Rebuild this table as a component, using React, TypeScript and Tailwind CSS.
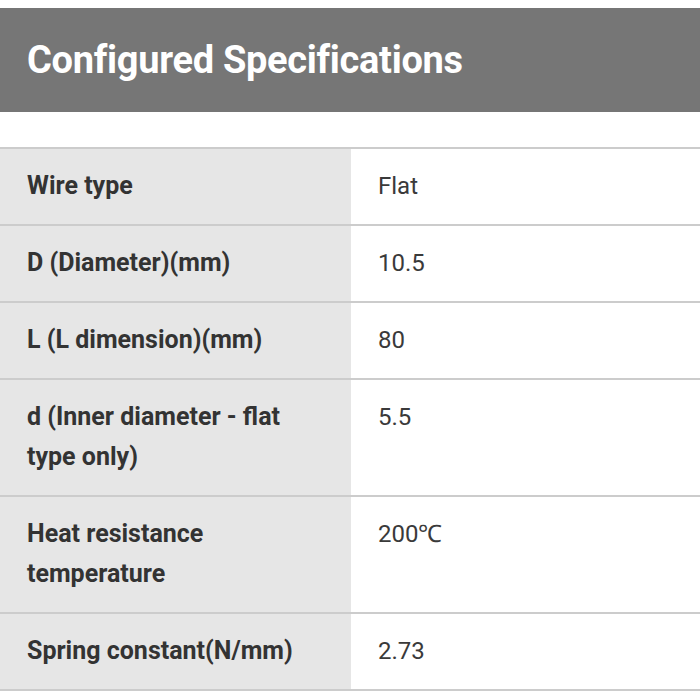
const specs: { label: string; value: string }[] = [
  { label: 'Wire type', value: 'Flat' },
  { label: 'D (Diameter)(mm)', value: '10.5' },
  { label: 'L (L dimension)(mm)', value: '80' },
  { label: 'd (Inner diameter - flat type only)', value: '5.5' },
  { label: 'Heat resistance temperature', value: '200℃' },
  { label: 'Spring constant(N/mm)', value: '2.73' },
];

export default function App() {
  return (
    <div className="w-[700px] h-[700px] overflow-hidden bg-white font-['Roboto',sans-serif] text-[#333]">
      <div className="mt-[8px] h-[104px] bg-[#767676] flex items-center px-[27px]">
        <h2 className="text-[38px] font-bold text-white tracking-[-0.3px]">Configured Specifications</h2>
      </div>

      <div className="mt-[35px] border-t-2 border-[#cccccc]">
        {specs.map((s) => (
          <div key={s.label} className="flex border-b-2 border-[#cccccc] leading-[40px]">
            <div className="w-[351px] shrink-0 bg-[#e6e6e6] pl-[27px] pr-[30px] pt-[17px] pb-[18px] text-[25px] font-bold">
              {s.label}
            </div>
            <div className="flex-1 pl-[27px] pt-[17px] pb-[18px] text-[24px] text-[#3a3a3a]">{s.value}</div>
          </div>
        ))}
      </div>
    </div>
  );
}
